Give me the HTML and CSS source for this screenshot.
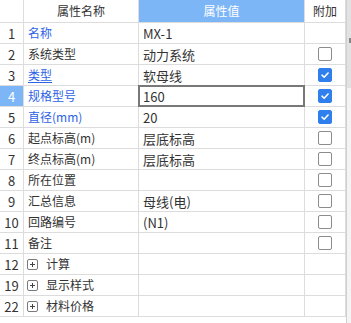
FILE: index.html
```html
<!DOCTYPE html>
<html lang="zh">
<head>
<meta charset="utf-8">
<link rel="stylesheet" href="styles.css">
</head>
<body>
<div class="panel">
  <div class="grid">
    <div class="row head">
      <div class="c num"></div>
      <div class="c name center">属性名称</div>
      <div class="c val center hl">属性值</div>
      <div class="c add center">附加</div>
    </div>
    <div class="row"><div class="c num">1</div><div class="c name link">名称</div><div class="c val">MX-1</div><div class="c add"></div></div>
    <div class="row"><div class="c num">2</div><div class="c name">系统类型</div><div class="c val">动力系统</div><div class="c add"><span class="cb"></span></div></div>
    <div class="row"><div class="c num">3</div><div class="c name link"><u>类型</u></div><div class="c val">软母线</div><div class="c add"><span class="cb on"><svg viewBox="0 0 14 14"><path d="M3.5 7.2 L6 9.6 L10.6 4.6" fill="none" stroke="#fff" stroke-width="1.8" stroke-linecap="round" stroke-linejoin="round"/></svg></span></div></div>
    <div class="row"><div class="c num sel">4</div><div class="c name link">规格型号</div><div class="c val edit">160</div><div class="c add"><span class="cb on"><svg viewBox="0 0 14 14"><path d="M3.5 7.2 L6 9.6 L10.6 4.6" fill="none" stroke="#fff" stroke-width="1.8" stroke-linecap="round" stroke-linejoin="round"/></svg></span></div></div>
    <div class="row"><div class="c num">5</div><div class="c name link">直径(mm)</div><div class="c val">20</div><div class="c add"><span class="cb on"><svg viewBox="0 0 14 14"><path d="M3.5 7.2 L6 9.6 L10.6 4.6" fill="none" stroke="#fff" stroke-width="1.8" stroke-linecap="round" stroke-linejoin="round"/></svg></span></div></div>
    <div class="row"><div class="c num">6</div><div class="c name">起点标高(m)</div><div class="c val">层底标高</div><div class="c add"><span class="cb"></span></div></div>
    <div class="row"><div class="c num">7</div><div class="c name">终点标高(m)</div><div class="c val">层底标高</div><div class="c add"><span class="cb"></span></div></div>
    <div class="row"><div class="c num">8</div><div class="c name">所在位置</div><div class="c val"></div><div class="c add"><span class="cb"></span></div></div>
    <div class="row"><div class="c num">9</div><div class="c name">汇总信息</div><div class="c val">母线(电)</div><div class="c add"><span class="cb"></span></div></div>
    <div class="row"><div class="c num">10</div><div class="c name">回路编号</div><div class="c val">(N1)</div><div class="c add"><span class="cb"></span></div></div>
    <div class="row"><div class="c num">11</div><div class="c name">备注</div><div class="c val"></div><div class="c add"><span class="cb"></span></div></div>
    <div class="row"><div class="c num">12</div><div class="c name"><span class="plus"></span>计算</div><div class="c val"></div><div class="c add"></div></div>
    <div class="row"><div class="c num">19</div><div class="c name"><span class="plus"></span>显示样式</div><div class="c val"></div><div class="c add"></div></div>
    <div class="row"><div class="c num">22</div><div class="c name"><span class="plus"></span>材料价格</div><div class="c val"></div><div class="c add"></div></div>
  </div>
  <div class="scroll"><div class="thumb"><span class="grip"></span></div></div>
</div>
</body>
</html>
```
FILE: styles.css
```css
html, body {
  margin: 0;
  padding: 0;
  background: #fff;
}
body {
  font-family: "Noto Sans CJK SC", "Noto Sans", sans-serif;
  font-size: 12px;
  color: #333;
}
.panel {
  display: flex;
  width: 351px;
  height: 323px;
  overflow: hidden;
}
.grid {
  width: 346px;
  flex: none;
}
.row {
  display: grid;
  grid-template-columns: 24px 115px 166px 41px;
  height: 21px;
}
.row.head {
  height: 23px;
}
.c {
  box-sizing: border-box;
  border-right: 1px solid #dcdcdc;
  border-bottom: 1px solid #dcdcdc;
  display: flex;
  align-items: center;
  padding-left: 4px;
  white-space: nowrap;
  line-height: 1;
}
.c.num {
  justify-content: center;
  padding-left: 0;
  font-size: 13px;
  color: #333;
}
.c.num.sel {
  background: #7db6f6;
  color: #fff;
}
.center {
  justify-content: center;
  padding-left: 0;
}
.hl {
  background: #7db6f6;
  color: #fff;
}
.c.val {
  font-size: 13px;
}
.head .c.val {
  font-size: 12px;
}
.link {
  color: #2d63e6;
}
.link u {
  text-decoration-thickness: 1px;
  text-underline-offset: 2px;
}
.c.add {
  justify-content: center;
  padding-left: 0;
}
.edit {
  position: relative;
}
.edit::after {
  content: "";
  position: absolute;
  left: -1px;
  top: -1px;
  right: -1px;
  bottom: -1px;
  border: 2px solid #787878;
}
.cb {
  box-sizing: border-box;
  width: 14px;
  height: 14px;
  border: 1px solid #8c8c8c;
  border-radius: 2px;
  background: #fff;
  display: block;
}
.cb.on {
  background: #2f80ed;
  border-color: #2f80ed;
}
.cb svg {
  display: block;
  width: 12px;
  height: 12px;
}
.plus {
  position: relative;
  box-sizing: border-box;
  width: 11px;
  height: 11px;
  border: 1px solid #7a7a7a;
  border-radius: 2px;
  margin: 0 8px 0 -1px;
  flex: none;
}
.plus::before,
.plus::after {
  content: "";
  position: absolute;
  background: #444;
}
.plus::before {
  left: 2px;
  top: 4px;
  width: 5px;
  height: 1px;
}
.plus::after {
  left: 4px;
  top: 2px;
  width: 1px;
  height: 5px;
}
.scroll {
  width: 5px;
  flex: none;
  border-left: 1px solid #d0d0d0;
  box-sizing: border-box;
  background: #f4f4f4;
}
.thumb {
  height: 88px;
  background: #e2e2e2;
  position: relative;
}
.grip {
  position: absolute;
  right: 0;
  top: 38px;
  width: 2px;
  height: 5px;
  background: #888;
}
```
